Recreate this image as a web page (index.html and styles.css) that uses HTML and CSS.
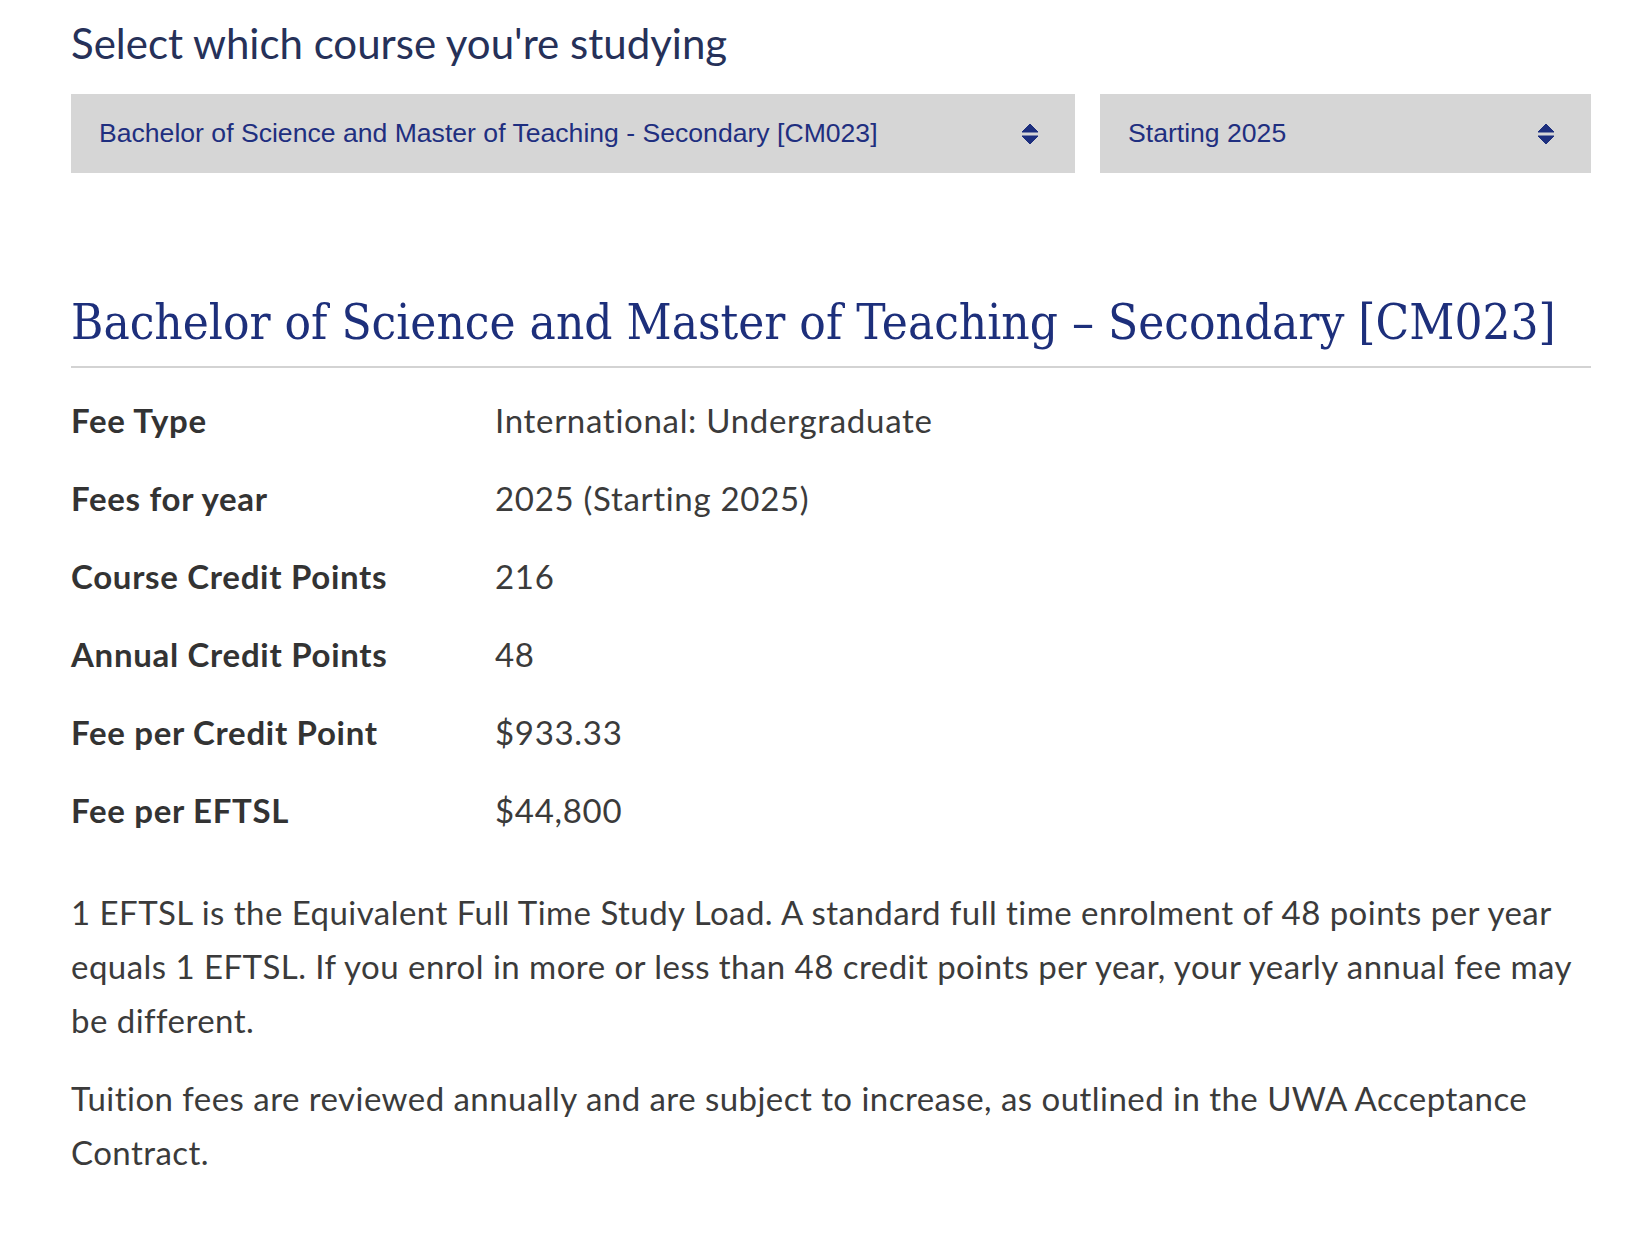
FILE: index.html
```html
<!DOCTYPE html>
<html lang="en">
<head>
<meta charset="utf-8">
<title>Course fees</title>
<link rel="stylesheet" href="styles.css">
</head>
<body>
<main class="page">
  <h1 class="select-title">Select which course you're studying</h1>
  <div class="selects">
    <div class="select">
      <span class="select-text">Bachelor of Science and Master of Teaching - Secondary [CM023]</span>
      <svg class="select-arrow" width="18" height="22" viewBox="0 0 18 22"><path d="M9 1 L17 9 L1 9 Z" fill="#1d2f7e" stroke="#1d2f7e" stroke-width="1" stroke-linejoin="round"/><path d="M1 13 L17 13 L9 21 Z" fill="#1d2f7e" stroke="#1d2f7e" stroke-width="1" stroke-linejoin="round"/></svg>
    </div>
    <div class="select">
      <span class="select-text">Starting 2025</span>
      <svg class="select-arrow" width="18" height="22" viewBox="0 0 18 22"><path d="M9 1 L17 9 L1 9 Z" fill="#1d2f7e" stroke="#1d2f7e" stroke-width="1" stroke-linejoin="round"/><path d="M1 13 L17 13 L9 21 Z" fill="#1d2f7e" stroke="#1d2f7e" stroke-width="1" stroke-linejoin="round"/></svg>
    </div>
  </div>

  <h2 class="course-title">Bachelor of Science and Master of Teaching – Secondary [CM023]</h2>

  <dl class="fees">
    <div class="fee-row"><dt>Fee Type</dt><dd>International: Undergraduate</dd></div>
    <div class="fee-row"><dt>Fees for year</dt><dd>2025 (Starting 2025)</dd></div>
    <div class="fee-row"><dt>Course Credit Points</dt><dd>216</dd></div>
    <div class="fee-row"><dt>Annual Credit Points</dt><dd>48</dd></div>
    <div class="fee-row"><dt>Fee per Credit Point</dt><dd>$933.33</dd></div>
    <div class="fee-row"><dt>Fee per EFTSL</dt><dd>$44,800</dd></div>
  </dl>

  <p class="note">1 EFTSL is the Equivalent Full Time Study Load. A standard full time enrolment of 48 points per year equals 1 EFTSL. If you enrol in more or less than 48 credit points per year, your yearly annual fee may be different.</p>
  <p class="note">Tuition fees are reviewed annually and are subject to increase, as outlined in the UWA Acceptance Contract.</p>
</main>
</body>
</html>
```

FILE: styles.css
```css
html, body {
  margin: 0;
  padding: 0;
  background: #ffffff;
}

.page {
  width: 1520px;
  margin: 0 0 0 71px;
  font-family: Lato, "Liberation Sans", sans-serif;
  color: #3b3b3b;
}

.select-title {
  margin: 19px 0 0;
  font-size: 42px;
  line-height: 48px;
  font-weight: 400;
  color: #263159;
}

.selects {
  display: grid;
  grid-template-columns: 1004px 491px;
  column-gap: 25px;
  margin-top: 27px;
}

.select {
  height: 79px;
  background: #d6d6d6;
  display: flex;
  align-items: center;
  justify-content: space-between;
  padding: 0 36px 0 28px;
}

.select-text {
  font-family: "Liberation Sans", Arial, sans-serif;
  font-size: 26.6px;
  color: #1f2f80;
}

.select-arrow {
  display: block;
  flex: none;
}

.course-title {
  margin: 120px 0 0;
  padding-bottom: 13px;
  border-bottom: 2px solid #d3d3d3;
  font-family: "DejaVu Serif Condensed", "DejaVu Serif", "Liberation Serif", serif;
  font-stretch: condensed;
  font-size: 49px;
  line-height: 60px;
  font-weight: 400;
  color: #1d2f7b;
}

.fees {
  margin: 13px 0 0;
}

.fee-row {
  display: grid;
  grid-template-columns: 424px 1fr;
  height: 78px;
  align-items: center;
  font-size: 33px;
  letter-spacing: 0.7px;
}

.fee-row dt {
  font-weight: 700;
  color: #333333;
}

.fee-row dd {
  margin: 0;
  color: #3b3b3b;
}

.note {
  margin: 36px 0 0;
  font-size: 33px;
  line-height: 54px;
  letter-spacing: 0.46px;
  color: #3b3b3b;
}

.note + .note {
  margin-top: 24px;
}
```
